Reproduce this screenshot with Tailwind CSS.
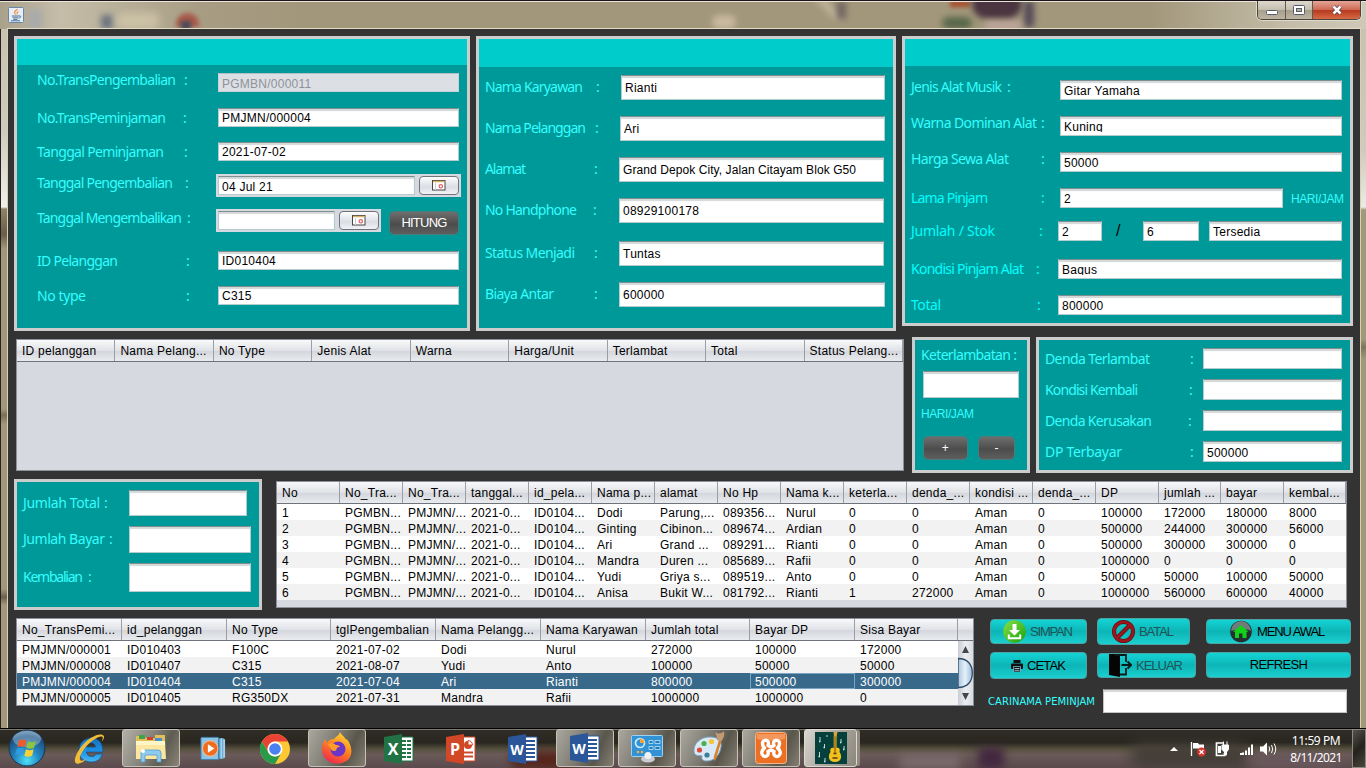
<!DOCTYPE html>
<html lang="id">
<head>
<meta charset="utf-8">
<title>Pengembalian</title>
<script src="https://cdn.jsdelivr.net/npm/@tailwindcss/browser@4"></script>
</head>
<body class="w-[1366px] h-[768px] overflow-hidden bg-[#a2977b] font-['Liberation_Sans',Arial,sans-serif] text-[12px] leading-[14px] tracking-[0.25px] text-black">
<div class="flex flex-col w-[1366px] h-[768px]">

  <!-- Title bar -->
  <header class="relative h-[29px] shrink-0 flex items-start border-t border-[#1c1418] bg-[linear-gradient(90deg,#aaa18b_0,#c5bda9_60px,#a89d84_200px,#a2977b_300px,#a2977b_1150px,#c5bda9_1290px,#cfc8b8_1366px)] overflow-hidden">
    <div class="absolute left-[28px] top-[8px] w-[14px] h-[20px] bg-[#a9aaaa] blur-[3px]"></div>
    <div class="absolute left-[101px] top-[14px] w-[12px] h-[14px] bg-[#6b7480] blur-[3px]"></div>
    <div class="absolute left-[116px] top-[12px] w-[44px] h-[16px] rounded-full bg-[#cdc2a6] blur-[4px]"></div>
    <div class="absolute left-[176px] top-[12px] w-[23px] h-[14px] rounded-t-full bg-[#a85a4a] blur-[2px]"></div>
    <div class="absolute left-[181px] top-[20px] w-[10px] h-[9px] bg-[#4a4a5a] blur-[2px]"></div>
    <div class="absolute left-[712px] top-[14px] w-[24px] h-[14px] rounded-full bg-[#c8b9a0] blur-[3px]"></div>
    <div class="absolute left-[812px] top-[2px] w-[32px] h-[8px] rotate-45 bg-[#beb398] blur-[3px]"></div>
    <div class="absolute left-[837px] top-0 w-[9px] h-[18px] bg-[#716561] blur-[3px]"></div>
    <div class="absolute left-[942px] top-[16px] w-[30px] h-[12px] rounded-full bg-[#58674a] blur-[3px]"></div>
    <div class="absolute left-[950px] top-0 w-[20px] h-[6px] bg-[#a84a2c] blur-[2px]"></div>
    <div class="absolute left-[972px] top-[-12px] w-[50px] h-[30px] rounded-full bg-[#4a3540] blur-[3px]"></div>
    <div class="absolute left-[1024px] top-0 w-[10px] h-[26px] bg-[#554a58] blur-[3px]"></div>
    <div class="absolute left-[985px] top-[20px] w-[36px] h-[9px] bg-[#bda69c] blur-[3px]"></div>
    <div class="absolute left-0 top-0 w-full h-px bg-[#ebe6dc]"></div>
    <div class="absolute left-[7px] bottom-0 w-[1354px] h-px bg-[#e2dcc4]"></div>
    <svg class="relative ml-[8px] mt-[6px]" width="16" height="16" viewBox="0 0 16 16">
      <rect x=".5" y=".5" width="15" height="15" rx="1" fill="#e9eef4" stroke="#6688a8"/>
      <path d="M9.500 2.300c-4 2.500-3.500 3.200-1.800 5.200M10.500 4.500c-2 1.100-1.800 1.800-1 3" fill="none" stroke="#e8883a" stroke-width="1.100"/>
      <path d="M3.800 9h7.200M4.600 10.800h5.600M5.200 12.400h4.200M2.800 13.800h9.400M11 9c2.600-.6 2.400 2-.6 2.200" fill="none" stroke="#49719c" stroke-width="1"/>
    </svg>
    <div class="relative ml-auto mr-[5px] w-[104px] h-[19px] flex rounded-b-[5px] border border-t-0 border-[#4a453e] overflow-hidden shadow-[0_0_0_1px_#e0dacb]">
      <div class="w-[28px] flex items-center justify-center border-r border-[#5f594f] bg-[linear-gradient(#dcd8cd,#c3bdae_50%,#a79f8c_52%,#bcb5a2)]">
        <svg class="mt-[5px]" width="12" height="5"><rect x=".5" y=".5" width="11" height="4" rx="1" fill="#fff" stroke="#555b68"/></svg>
      </div>
      <div class="w-[27px] flex items-center justify-center border-r border-[#5f594f] bg-[linear-gradient(#dcd8cd,#c3bdae_50%,#a79f8c_52%,#bcb5a2)]">
        <svg width="12" height="10"><rect x=".5" y=".5" width="11" height="9" rx="1" fill="#fff" stroke="#555b68"/><rect x="3.500" y="3.500" width="5" height="3" fill="#b5ae9c" stroke="#555b68"/></svg>
      </div>
      <div class="flex-1 flex items-center justify-center bg-[linear-gradient(#e4a596,#cf6a55_48%,#b53a20_52%,#d86a45)]">
        <svg width="12" height="10" viewBox="0 0 12 10"><path d="M2.500 1.500l7 7M9.500 1.500l-7 7" stroke="#5a4048" stroke-width="4"/><path d="M2.500 1.500l7 7M9.500 1.500l-7 7" stroke="#fff" stroke-width="2.500"/></svg>
      </div>
    </div>
  </header>

  <!-- Window body -->
  <div class="flex h-[699px] shrink-0">
    <div class="w-[8px] shrink-0 border-l border-r border-l-[#26231d] border-r-[#d8cfae] bg-[linear-gradient(#c9c2b2_0,#cfcabf_100px,#f0efec_178px,#8f8465_180px,#6a5e4c_205px,#a2977b_220px,#a2977b_380px,#796e58_386px,#a2977b_395px,#a2977b_560px,#6b604e_568px,#a2977b_576px)]"></div>

    <main class="w-[1352px] h-[699px] flex flex-col bg-[#333333] pl-[6px] pt-[7px]">
      <div class="flex gap-[6px] items-start">
        <section id="p1" class="w-[456px] h-[295px] border-[3px] border-[#cccccc] bg-[#009999]"><div class="h-[26px] bg-[#00cccc]"></div></section>
        <section id="p2" class="w-[420px] h-[295px] border-[3px] border-[#cccccc] bg-[#009999]"><div class="h-[28px] bg-[#00cccc]"></div></section>
        <section id="p3" class="w-[451px] h-[290px] border-[3px] border-[#cccccc] bg-[#009999]"><div class="h-[27px] bg-[#00cccc]"></div></section>
      </div>

      <div class="flex items-start mt-[6px]">
        <div id="tA" class="ml-[2px] mt-[2px] w-[888px] h-[132px] border border-[#8c9099] bg-[#d6d9df]"></div>
        <section class="ml-[8px] w-[118px] h-[136px] border-[3px] border-[#cccccc] bg-[#009999] pl-[6px] pt-[5px]">
          <div class="whitespace-nowrap h-[20px] leading-[20px] text-[14px] font-['Noto_Sans',sans-serif] tracking-normal text-[#33ffff]"><span data-w="96" data-f="14px 'Noto Sans'">Keterlambatan :</span></div>
          <div class="ml-[2px] mt-[6px] w-[96px] h-[27px] border border-[#b5cccc] border-t-[#7e8f90] bg-white shadow-[inset_0_2px_1px_#d4d8d8]"></div>
          <div class="mt-[8px] leading-[16px] text-[#33ffff]"><span data-w="53" data-f="12px 'Liberation Sans'">HARI/JAM</span></div>
          <div class="ml-[2px] mt-[14px] flex gap-[10px] text-white">
            <div class="w-[45px] h-[24px] rounded-[5px] border border-[#4a7c7c] bg-[linear-gradient(#6e6e6e,#4c4c4c_55%,#5e5e5e)] flex items-center justify-center">+</div>
            <div class="w-[37px] h-[24px] rounded-[5px] border border-[#4a7c7c] bg-[linear-gradient(#6e6e6e,#4c4c4c_55%,#5e5e5e)] flex items-center justify-center">-</div>
          </div>
        </section>
        <section id="p4" class="ml-[6px] w-[317px] h-[136px] border-[3px] border-[#cccccc] bg-[#009999]"></section>
      </div>

      <div class="flex items-start mt-[6px]">
        <section id="p5" class="w-[248px] h-[131px] border-[3px] border-[#cccccc] bg-[#009999]"></section>
        <div id="tB" class="ml-[14px] mt-[2px] w-[1071px] h-[127px] border border-[#8c9099] bg-[#d6d9df]"></div>
      </div>

      <div class="flex items-start mt-[8px]">
        <div class="ml-[2px] w-[958px] h-[88px] border border-[#8c9099] flex bg-[#d6d9df]">
          <div id="tC" class="w-[941px] overflow-hidden"></div>
          <div class="w-[15px] flex flex-col">
            <div class="h-[22px] border-b border-[#6f737c] bg-[linear-gradient(#f6f7f9,#dfe1e6_50%,#d2d5db_52%,#e9ebee)]"></div>
            <svg width="15" height="64" viewBox="0 0 15 64">
              <defs><linearGradient id="tr"><stop offset="0" stop-color="#c9ccd3"/><stop offset=".5" stop-color="#eceef1"/><stop offset="1" stop-color="#d8dbe0"/></linearGradient>
              <linearGradient id="th"><stop offset="0" stop-color="#a8c4dc"/><stop offset=".5" stop-color="#e6f1f9"/><stop offset="1" stop-color="#9cbcd8"/></linearGradient></defs>
              <rect width="15" height="64" fill="url(#tr)"/>
              <path d="M0 17.500C10 17.500 14.300 24 14.300 32S10 46.500 0 46.500z" fill="url(#th)" stroke="#2f4a66" stroke-width="1.300"/>
              <path d="M4 12l3.500-7 3.500 7zM4 52h7l-3.500 7z" fill="#44474e"/>
            </svg>
          </div>
        </div>
        <div class="ml-[16px] w-[368px]">
          <div class="flex items-start h-[34px] text-[13px] tracking-normal">
            <div class="mt-px w-[97px] h-[25px] rounded-[4px] border border-[#4ba3a5] bg-[linear-gradient(#15d3d4,#0cb5b6_50%,#1ccfd0)] flex items-center pl-[12px] gap-[4px] text-[#1d5558]">
              <svg class="shrink-0" width="23" height="23" viewBox="0 0 23 23"><defs><linearGradient id="g1" x2="1" y2="1"><stop offset="0" stop-color="#8be046"/><stop offset="1" stop-color="#14a30d"/></linearGradient></defs><circle cx="11.500" cy="11.500" r="11.300" fill="url(#g1)"/><path d="M9.500 4h4v6h3.500l-5.500 5.500L6 10h3.500z" fill="#fff"/><path d="M5.800 14.500v3.700h11.400v-3.700" fill="none" stroke="#fff" stroke-width="2"/></svg>
              <span data-w="43" data-f="13px 'Liberation Sans'">SIMPAN</span>
            </div>
            <div class="ml-[10px] w-[93px] h-[27px] rounded-[4px] border border-[#4ba3a5] bg-[linear-gradient(#15d3d4,#0cb5b6_50%,#1ccfd0)] flex items-center pl-[14px] gap-[4px] text-[#1d5558]">
              <svg class="shrink-0" width="23" height="23" viewBox="0 0 23 23"><circle cx="11.500" cy="11.500" r="9.500" fill="none" stroke="#5d0d12" stroke-width="4"/><path d="M5 18L18 5" stroke="#5d0d12" stroke-width="4.200"/><circle cx="11.500" cy="11.500" r="9.500" fill="none" stroke="#9c171c" stroke-width="2.600"/><path d="M5 18L18 5" stroke="#9c171c" stroke-width="2.600"/></svg>
              <span data-w="35" data-f="13px 'Liberation Sans'">BATAL</span>
            </div>
            <div class="ml-[16px] mt-px w-[145px] h-[25px] rounded-[4px] border border-[#4ba3a5] bg-[linear-gradient(#15d3d4,#0cb5b6_50%,#1ccfd0)] flex items-center pl-[23px] gap-[5px]">
              <svg class="shrink-0" width="22" height="23" viewBox="0 0 22 23"><circle cx="11" cy="11.500" r="10.800" fill="#23302f"/><path d="M1 11a10 10 0 0 1 20 0C15 8 8 9 1 11z" fill="#6f7c7b"/><path d="M11 5l7.500 6.800h-2v6.200h-4v-4.500h-3.500V18h-4v-6.200h-2z" fill="#12d11b"/></svg>
              <span class="whitespace-nowrap" data-w="69" data-f="13px 'Liberation Sans'">MENU AWAL</span>
            </div>
          </div>
          <div class="flex items-start h-[37px] text-[13px] tracking-normal">
            <div class="w-[97px] h-[27px] rounded-[4px] border border-[#4ba3a5] bg-[linear-gradient(#15d3d4,#0cb5b6_50%,#1ccfd0)] flex items-center pl-[20px] gap-[4px]">
              <svg class="shrink-0" width="12" height="12" viewBox="0 0 12 12"><path d="M2.500 0h7v3h-7z" fill="#111"/><rect y="3.500" width="12" height="5.500" rx="1" fill="#111"/><path d="M2.500 6.500h7V12h-7z" fill="#111" stroke="#8ce" stroke-width=".7"/><path d="M3.500 8.500h5M3.500 10.300h5" stroke="#bde" stroke-width=".8"/></svg>
              <span data-w="39" data-f="13px 'Liberation Sans'">CETAK</span>
            </div>
            <div class="ml-[10px] mt-px w-[99px] h-[25px] rounded-[4px] border border-[#4ba3a5] bg-[linear-gradient(#15d3d4,#0cb5b6_50%,#1ccfd0)] flex items-center pl-[11px] gap-[4px] text-[#1d5558]">
              <svg class="shrink-0" width="23" height="23" viewBox="0 0 23 23"><path d="M0 0h5l6 2v21L0 21z" fill="#050505"/><path d="M6 1h11V8M17 14v6.500h-6" fill="none" stroke="#0a1a1a" stroke-width="1.800"/><path d="M12.500 11h9M18.500 7.500l3.500 3.500-3.500 3.500" fill="none" stroke="#0a1a1a" stroke-width="2"/></svg>
              <span data-w="47" data-f="13px 'Liberation Sans'">KELUAR</span>
            </div>
            <div class="ml-[10px] w-[145px] h-[26px] rounded-[4px] border border-[#4ba3a5] bg-[linear-gradient(#15d3d4,#0cb5b6_50%,#1ccfd0)] flex items-center justify-center"><span data-w="58" data-f="13px 'Liberation Sans'">REFRESH</span></div>
          </div>
          <div class="flex items-start">
            <div class="ml-[-2px] mt-[6px] w-[115px] shrink-0 font-['DejaVu_Sans',sans-serif] text-[10px] leading-[14px] tracking-normal text-[#33ffff]"><span data-w="107" data-f="10px 'DejaVu Sans'" class="whitespace-nowrap">CARINAMA PEMINJAM</span></div>
            <div class="w-[244px] h-[24px] border border-[#c4c4c4] border-t-[#8a8a8a] bg-white shadow-[inset_0_2px_1px_#d8d8d8]"></div>
          </div>
        </div>
      </div>
    </main>
    <div class="w-[6px] shrink-0 border-l border-[#d8cfae] bg-[linear-gradient(#c9c2b2_0,#cfcabf_120px,#ebeae6_178px,#a2977b_181px,#a2977b_310px,#7e745c_318px,#a2977b_330px)]"></div>
  </div>

  <!-- Taskbar -->
  <footer class="relative h-[40px] flex items-start border-t border-black overflow-hidden bg-[linear-gradient(#2f2d26,#292720_35%,#57513f_52%,#6a5a58_65%,#5b4a4d)]">
    <div class="absolute left-0 top-0 w-full h-px bg-[#7d7a70]"></div>
    <div class="absolute left-[510px] top-[22px] w-[70px] h-[18px] rounded-full bg-[#57241a] blur-[5px]"></div>
    <div class="absolute left-[640px] top-[20px] w-[30px] h-[20px] bg-[#4c211c] blur-[5px]"></div>
    <div class="absolute left-[900px] top-[26px] w-[60px] h-[14px] bg-[#7c6b6d] blur-[5px]"></div>
    <div class="absolute left-[978px] top-[18px] w-[26px] h-[22px] bg-[#42283f] blur-[5px]"></div>
    <div class="absolute left-[1130px] top-[14px] w-[120px] h-[26px] rounded-full bg-[#433e37] blur-[7px]"></div>
    <div class="absolute left-[1250px] top-[24px] w-[90px] h-[16px] bg-[#69585c] blur-[6px]"></div>
    <svg class="relative ml-[8px] shrink-0" width="38" height="38" viewBox="0 0 38 38">
      <defs><radialGradient id="orb" cx=".5" cy=".85" r=".85"><stop offset="0" stop-color="#4fe0f5"/><stop offset=".4" stop-color="#2389c4"/><stop offset=".8" stop-color="#1f4f7d"/><stop offset="1" stop-color="#6a94b4"/></radialGradient></defs>
      <circle cx="19" cy="19" r="18" fill="url(#orb)" stroke="#18344e"/><ellipse cx="19" cy="10" rx="14" ry="8" fill="#b9d5e8" opacity=".4"/>
      <path d="M11 11.500c3-1.500 5-1 7.500.2l-1.700 6.600c-2.600-1.200-4.700-1.300-7.600-.2z" fill="#ee5c2c"/>
      <path d="M20 12.300c3 1.200 5 1.200 8-.3l-1.900 6.800c-2.600 1.200-5 1.200-7.700 0z" fill="#8cc63e"/>
      <path d="M8.800 19.500c3-1.100 5-1 7.600.2l-1.700 6.500c-2.500-1-4.700-1.200-7.500-.2z" fill="#2f9be0"/>
      <path d="M18 20.300c2.600 1.100 5 1.200 7.700-.1L24 26.700c-2.700 1.300-5 1.200-7.700 0z" fill="#fbd136"/>
    </svg>
    <div class="relative ml-[14px] flex gap-[4px] h-[39px]">
      <div class="w-[58px] flex items-center justify-center">
        <svg width="34" height="34" viewBox="0 0 34 34"><defs><linearGradient id="ie" x2="0" y2="1"><stop offset="0" stop-color="#1a6fb8"/><stop offset=".5" stop-color="#1c8ee0"/><stop offset="1" stop-color="#45b8f5"/></linearGradient></defs><path d="M7 19C7 11 12 6 19.500 6S31 11.500 31 20H14.500c.3 3 2.500 4.500 5 4.500 2.200 0 3.700-.8 4.500-2.500h6.500c-1.500 5-5.500 8-11 8C12 30 7 26 7 19zm7.500-4h9c-.3-2.500-2-4-4.500-4s-4.200 1.500-4.500 4z" fill="url(#ie)" stroke="#0d4f8c" stroke-width=".7"/><path d="M32 4.500C30-.5 17 4.500 9 15c-7 9.500-8.500 18-2 16.500 3-.8 5-2 7-4.500-6 4-8.500.5-3.500-7.500C16 10 27 3.500 30 4.500c1.300.5.800 2.500-.3 5 2-2.200 2.500-4 2.300-5z" fill="#f0bd38"/></svg>
      </div>
      <div class="w-[58px] mb-px rounded-[3px] border border-[#c6c2b8] bg-[linear-gradient(115deg,#b3b0a7,#84827a_45%,#5f5c52_70%,#8c8578)] flex items-center justify-center">
        <svg width="34" height="32" viewBox="0 0 34 32"><path d="M2 4h8l2 2h9V3h10v23H2z" fill="#e3bd5a"/><path d="M5 3h6v4H5z" fill="#3fa348"/><path d="M13 5h6v3h-6z" fill="#d04030"/><path d="M21 6h7v3h-7z" fill="#4590cc"/><path d="M2 9h29l1 18H2z" fill="#fbe7a0"/><path d="M2 9h29v4H2z" fill="#fff5c6"/><path d="M7 30v-9q0-3 3-3h14q3 0 3 3v9h-4v-7H11v7z" fill="#8fcbee" stroke="#4f9dcd" stroke-width=".8"/><circle cx="9" cy="19" r="2" fill="#fff"/></svg>
      </div>
      <div class="w-[58px] flex items-center justify-center">
        <svg width="26" height="25" viewBox="0 0 28 26"><path d="M11 2h15v22H11z" fill="#5c9fca"/><path d="M22 2h2v22h-2zM25 3h2v20h-2z" fill="#a7d1ea"/><rect x="1" y="1" width="19" height="24" rx="1" fill="#8dc3e4" stroke="#3878a6"/><circle cx="11" cy="13" r="8.300" fill="#ef6c1e" stroke="#fbc59b"/><path d="M8.500 8.500l7 4.500-7 4.500z" fill="#fff"/></svg>
      </div>
      <div class="w-[58px] flex items-center justify-center">
        <svg width="32" height="32" viewBox="0 0 32 32"><circle cx="16" cy="16" r="15" fill="#fcc934"/><path d="M3 8.500A15 15 0 0 1 29 8.500H16a7.500 7.500 0 0 0-6.500 11z" fill="#ea4335"/><path d="M3 8.500A15 15 0 0 0 16 31l6.500-11.300A7.500 7.500 0 0 1 9.500 19.700z" fill="#279a4b"/><circle cx="16" cy="16" r="7.500" fill="#fff"/><circle cx="16" cy="16" r="5.800" fill="#4a80f0"/></svg>
      </div>
      <div class="w-[58px] mb-px rounded-[3px] border border-[#c6c2b8] bg-[linear-gradient(115deg,#aaa79e,#7b7970_45%,#59564c_70%,#857e72)] flex items-center justify-center">
        <svg width="34" height="34" viewBox="0 0 34 34"><defs><linearGradient id="ff" x1=".8" y1="0" x2=".3" y2="1"><stop offset="0" stop-color="#ffe03a"/><stop offset=".45" stop-color="#ff8a1e"/><stop offset="1" stop-color="#f0264f"/></linearGradient></defs><path d="M20 1c1 3 4 4 5.500 7 2 .3 3.500 3 4 4.500C35 24 28 32.500 17.500 32.500S1 25 2 16c.4-3.500 2-6 3.500-8 0 2 .5 3 1.500 3.500C9 9 11 8 14 8c2-3 5-3 6-7z" fill="url(#ff)"/><circle cx="18" cy="18" r="7.500" fill="#6b36c8"/><path d="M8 13c3-2 6-1 8 1 2 0 3 .5 4 2-3 .2-4 1.500-3.500 3-2 2-6 1-6.500-3-1-.5-2-1.500-2-3z" fill="#ff9b28"/></svg>
      </div>
      <div class="w-[58px] flex items-center justify-center">
        <svg width="32" height="30" viewBox="0 0 32 30"><path d="M17 3h13v24H17z" fill="#fff" stroke="#217346"/><path d="M19 7h9M19 11h9M19 15h9M19 19h9M19 23h9" stroke="#217346" stroke-width="2"/><path d="M23.500 5v20" stroke="#fff"/><path d="M1 3l18-3v30L1 27z" fill="#217346"/><text x="10" y="21" text-anchor="middle" font-family="Open Sans" font-weight="700" font-size="16" letter-spacing="0" fill="#fff">X</text></svg>
      </div>
      <div class="w-[58px] flex items-center justify-center">
        <svg width="32" height="30" viewBox="0 0 32 30"><path d="M17 3h13v24H17z" fill="#fff" stroke="#d24726"/><circle cx="23" cy="11" r="4" fill="#d24726"/><path d="M23 11V6.500a4.500 4.500 0 0 1 4.500 4.500z" fill="#fff" stroke="#d24726"/><path d="M19 18.500h9M19 22.500h9" stroke="#d24726" stroke-width="2"/><path d="M1 3l18-3v30L1 27z" fill="#d24726"/><text x="10" y="21" text-anchor="middle" font-family="Open Sans" font-weight="700" font-size="16" letter-spacing="0" fill="#fff">P</text></svg>
      </div>
      <div class="w-[58px] flex items-center justify-center">
        <svg width="32" height="30" viewBox="0 0 32 30"><path d="M17 3h13v24H17z" fill="#fff" stroke="#2b579a"/><path d="M19 7h9M19 11h9M19 15h9M19 19h9M19 23h9" stroke="#2b579a" stroke-width="1.800"/><path d="M1 3l18-3v30L1 27z" fill="#2b579a"/><text x="10" y="20.500" text-anchor="middle" font-family="Open Sans" font-weight="700" font-size="14" letter-spacing="0" fill="#fff">W</text></svg>
      </div>
      <div class="w-[58px] mb-px rounded-[3px] border border-[#c6c2b8] bg-[linear-gradient(115deg,#aaa79e,#7b7970_45%,#59564c_70%,#857e72)] flex items-center justify-center">
        <svg width="32" height="30" viewBox="0 0 32 30"><path d="M17 3h13v24H17z" fill="#fff" stroke="#2b579a"/><path d="M19 7h9M19 11h9M19 15h9M19 19h9M19 23h9" stroke="#2b579a" stroke-width="1.800"/><path d="M1 3l18-3v30L1 27z" fill="#2b579a"/><text x="10" y="20.500" text-anchor="middle" font-family="Open Sans" font-weight="700" font-size="14" letter-spacing="0" fill="#fff">W</text></svg>
      </div>
      <div class="w-[58px] mb-px rounded-[3px] border border-[#c6c2b8] bg-[linear-gradient(115deg,#aaa79e,#7b7970_45%,#59564c_70%,#857e72)] flex items-center justify-center">
        <svg width="34" height="30" viewBox="0 0 34 30"><rect x="1.500" y="2.500" width="31" height="21" rx="1" fill="#3193d6" stroke="#9cd1f2"/><circle cx="10" cy="10" r="4.500" fill="none" stroke="#cdeafa" stroke-width="1.700"/><path d="M10 10V5.500A4.500 4.500 0 0 1 14.500 10z" fill="#f6a338"/><path d="M19 7.500h4v3h-4zM25 7.500h5v3h-5zM19 13.500h4v3h-4zM25 13.500h5v3h-5z" fill="#237db8" stroke="#bfe4f8" stroke-width=".8"/><circle cx="8" cy="19" r="1.300" fill="#f7b045"/><circle cx="12" cy="19" r="1.300" fill="#f7b045"/><ellipse cx="18" cy="26" rx="7" ry="3.500" fill="#c9cdd1"/><circle cx="18" cy="22.500" r="3.500" fill="#f0f2f3"/></svg>
      </div>
      <div class="w-[58px] mb-px rounded-[3px] border border-[#c6c2b8] bg-[linear-gradient(115deg,#aaa79e,#7b7970_45%,#59564c_70%,#857e72)] flex items-center justify-center">
        <svg width="34" height="34" viewBox="0 0 34 34"><path d="M2 21C1 12 9 6 18 6c8 0 12 4 11 10-1 7-6 14-14 14-4 0-6-2-5-4 1-3-7 1-8-5z" fill="#d9eaf6" stroke="#7ba6c4"/><circle cx="7.500" cy="19" r="2.600" fill="#e04a3c"/><circle cx="12" cy="12.500" r="2.600" fill="#4bb04f"/><circle cx="19.500" cy="10.500" r="2.600" fill="#f3c536"/><circle cx="15" cy="24" r="2.600" fill="#3e7f98"/><path d="M23 30c-2-3-1-5 0-8l4-13 2.500.8-4 13c-1 3-1 5-2.500 7.200z" fill="#d9822d"/><path d="M25 9c0-4-1-5-2-8 4 3 6 1 9-.5 1 4-.5 7-3 10z" fill="#c49a72"/></svg>
      </div>
      <div class="w-[58px] mb-px rounded-[3px] border border-[#c6c2b8] bg-[linear-gradient(115deg,#aaa79e,#7b7970_45%,#59564c_70%,#857e72)] flex items-center justify-center">
        <svg width="32" height="32" viewBox="0 0 32 32"><rect x=".5" y=".5" width="31" height="31" rx="3" fill="#ec7024" stroke="#f7b58c"/><path d="M2 2h28v5q-14 3-28 0z" fill="#f8b184" opacity=".6"/><path d="M13 13.500C14.500 9.500 12 7.500 9.500 8.500 6.500 9.500 7 13.500 9.500 16 6 18.500 6 22.500 8.500 24c3 1.500 5.500-1 4.500-4.500M19 13.500c-1.500-4 1-6 3.500-5 3 1 2.500 5 0 7.500 3.500 2.500 3.500 6.500 1 8-3 1.500-5.500-1-4.500-4.500M13 13.500q3 2.500 6 0M13 19.500q3-2.500 6 0" fill="none" stroke="#fff" stroke-width="3.400" stroke-linejoin="round" stroke-linecap="round"/></svg>
      </div>
      <div class="w-[53px] mb-px rounded-[3px] border border-[#dedad2] bg-[linear-gradient(115deg,#d8d6cf,#aaa79e_50%,#8c877b)] shadow-[4px_0_0_-1px_#8f8b80] flex items-center justify-center">
        <svg width="32" height="32" viewBox="0 0 32 32"><rect width="32" height="32" fill="#05403c"/><path d="M18.500 0h4l-1 5h-2.500z" fill="#d9a43a"/><path d="M18.700 4h2.800v12c2.500-1 4 1 3 4 3 4 2 10-4.500 10s-7.500-6-4.500-10c-1-3 .7-5 3.200-4z" fill="#f2c11c"/><path d="M20 4v18" stroke="#a06a1c" stroke-width="1.500"/><path d="M17.500 26h5M18.500 21.500h3" stroke="#5a3a12" stroke-width="1.300"/><path d="M5 5v4M9.500 12v3M4.500 20v4M10 26v3M12 3v2M26 7v3M29 14v3" stroke="#d7e6e3" stroke-width=".9"/><path d="M4 9.500h1.500M8.500 15.500H10M3.500 24.500H5M9 29.500h1.500M25 10.500h1.500M28 17.500h1.500" stroke="#d7e6e3" stroke-width="1.300"/></svg>
      </div>
    </div>
    <div class="relative ml-auto flex items-center h-[39px] text-white">
      <svg width="108" height="18" viewBox="0 0 108 18"><path d="M0 11l4-4 4 4z" fill="#fff"/>
        <path d="M21.500 2v14" stroke="#fff" stroke-width="1.300"/><path d="M23 3h5l1 1.500h5V10h-5l-1-1.500h-5z" fill="#fff"/><circle cx="31.500" cy="12" r="4.500" fill="#d0342c"/><path d="M29.500 10l4 4M33.500 10l-4 4" stroke="#fff" stroke-width="1.300"/>
        <path d="M53 3h-6.500v12.500h8V13" fill="none" stroke="#fff" stroke-width="1.700"/><path d="M48 6h3v7h-3z" fill="#fff"/><path d="M52 5h6.500v4.500L56.500 12v3h-2v-3L52 9.500zM53.500 1.500v4M57 1.500v4" fill="#fff" stroke="#fff"/>
        <path d="M70 14h2M73 12.500v2.500M76 10.500v4.500M79 7.500v7.500M82 4.500v10.500" stroke="#fff" stroke-width="2"/>
        <path d="M90 6.500h3L97 2.500v13L93 11.500h-3z" fill="#fff"/><path d="M99 6.500q1.500 2.500 0 5M101.500 5q2.500 4 0 8M104 3.500q3.500 5.500 0 11" fill="none" stroke="#fff" stroke-width="1"/></svg>
      <div class="ml-[7px] w-[62px] mt-[1px] flex flex-col items-center font-['Noto_Sans',sans-serif] text-[12px] leading-[17px] tracking-normal"><span data-w="49" data-f="12px 'Noto Sans'" class="whitespace-nowrap">11:59 PM</span><span data-w="52" data-f="12px 'Noto Sans'" class="whitespace-nowrap">8/11/2021</span></div>
      <div class="ml-[5px] w-[14px] h-[39px] border border-[#8d897f] bg-[linear-gradient(135deg,#55524b,#24221d_50%,#4c463f)]"></div>
    </div>
  </footer>
</div>

<script>
const LABEL = "shrink-0 whitespace-nowrap h-[20px] leading-[20px] text-[14px] font-['Noto_Sans',sans-serif] tracking-normal";
const FIELD = "shrink-0 border border-[#b5cccc] border-t-[#7e8f90] bg-white shadow-[inset_0_2px_1px_#d4d8d8] pl-[3px] whitespace-nowrap overflow-hidden";
const field = (cls, text = "", clip = "") => `<div class="${FIELD} ${cls}">${text === "" ? "" : `<div class="${clip}">${text}</div>`}</div>`;
const row = (rowCls, lblCls, text, w, colonCls, rest) =>
  `<div class="flex items-start ${rowCls}"><div class="${LABEL} ${lblCls}"><span data-w="${w}" data-f="14px 'Noto Sans'">${text}</span></div><div class="${LABEL} ${colonCls}">:</div>${rest}</div>`;
const add = (id, html) => document.getElementById(id).insertAdjacentHTML("beforeend", html);
const C1 = "text-[#33ffff]";

const F19 = "w-[241px] h-[19px] pt-[2px]";
const calBtn = `<div class="w-[40px] h-[19px] rounded-[4px] border border-[#6f747c] bg-[linear-gradient(#fdfdfe,#dadde3_60%,#f2f3f6)] flex items-center justify-center"><svg width="14" height="11" viewBox="0 0 14 11"><rect x=".5" y=".5" width="12.500" height="9.500" fill="#fff" stroke="#4a4542"/><path d="M1 1.500h11.500" stroke="#d8b06a" stroke-width="1.500"/><path d="M3.500 3v7" stroke="#ccd"/><circle cx="8.800" cy="6.300" r="1.700" fill="none" stroke="#e06060" stroke-width="1.200"/></svg></div>`;
add("p1",
  row("ml-[20px] mt-[5px] h-[20px]", "w-[147px] " + C1, "No.TransPengembalian", 139, "w-[34px] " + C1,
    `<div class="mt-[3px] w-[241px] h-[19px] border border-[#c9d2d6] border-t-[#b6bfc4] bg-[#dcdfe4] text-[#8e9299] pl-[3px] pt-[3px]">PGMBN/000011</div>`) +
  row("ml-[20px] mt-[18px] h-[20px]", "w-[146px] " + C1, "No.TransPeminjaman", 129, "w-[35px] " + C1, field(F19, "PMJMN/000004")) +
  row("ml-[20px] mt-[14px] h-[20px]", "w-[147px] " + C1, "Tanggal Peminjaman", 127, "w-[34px] " + C1, field(F19, "2021-07-02")) +
  row("ml-[20px] mt-[11px] h-[20px]", "w-[148px] " + C1, "Tanggal Pengembalian", 136, "w-[31px] " + C1,
    `<div class="mt-px w-[245px] h-[23px] bg-[#d6d9df] flex gap-[4px] p-[2px]">${field("w-[197px] h-[19px] pt-[3px]", "04 Jul 21")}${calBtn}</div>`) +
  row("ml-[20px] mt-[15px] h-[20px]", "w-[150px] " + C1, "Tanggal Mengembalikan", 145, "w-[29px] " + C1,
    `<div class="mt-px w-[165px] h-[23px] bg-[#d6d9df] flex gap-[4px] p-[2px]">${field("w-[117px] h-[19px]")}${calBtn}</div>
     <div class="ml-[8px] mt-[3px] w-[70px] h-[24px] shrink-0 rounded-[5px] border border-[#4a7c7c] bg-[linear-gradient(#6e6e6e,#4c4c4c_55%,#5e5e5e)] flex items-center justify-center text-[13px] text-white tracking-normal"><span data-w="46" data-f="13px 'Liberation Sans'">HITUNG</span></div>`) +
  row("ml-[20px] mt-[23px] h-[20px]", "w-[149px] " + C1, "ID Pelanggan", 81, "w-[32px] " + C1, field(F19, "ID010404")) +
  row("ml-[20px] mt-[15px] h-[20px]", "w-[149px] " + C1, "No type", 49, "w-[32px] " + C1, field(F19, "C315")));

add("p2",
  row("ml-[6px] mt-[8px] h-[25px]", "mt-[2px] w-[111px] " + C1, "Nama Karyawan", 98, "mt-[2px] w-[25px] " + C1, field("w-[264px] h-[25px] pt-[5px]", "Rianti")) +
  row("ml-[6px] mt-[16px] h-[25px]", "mt-[2px] w-[110px] " + C1, "Nama Pelanggan", 101, "mt-[2px] w-[25px] " + C1, field("w-[265px] h-[25px] pt-[5px]", "Ari")) +
  row("ml-[6px] mt-[16px] h-[25px]", "mt-[2px] w-[109px] " + C1, "Alamat", 41, "mt-[2px] w-[25px] " + C1, field("w-[265px] h-[25px] pt-[5px]", `<span data-w="233" data-f="12px 'Liberation Sans'">Grand Depok City, Jalan Citayam Blok G50</span>`)) +
  row("ml-[6px] mt-[16px] h-[25px]", "mt-[2px] w-[108px] " + C1, "No Handphone", 92, "mt-[2px] w-[26px] " + C1, field("w-[265px] h-[25px] pt-[5px]", "08929100178")) +
  row("ml-[6px] mt-[18px] h-[25px]", "mt-[2px] w-[109px] " + C1, "Status Menjadi", 90, "mt-[2px] w-[25px] " + C1, field("w-[265px] h-[25px] pt-[5px]", "Tuntas")) +
  row("ml-[6px] mt-[16px] h-[25px]", "mt-[2px] w-[109px] " + C1, "Biaya Antar", 69, "mt-[2px] w-[25px] " + C1, field("w-[266px] h-[25px] pt-[5px]", "600000")));

const CLIP = "h-[12px] overflow-hidden";
const C2 = "text-[#00ffff]";
add("p3",
  row("ml-[6px] mt-[11px] h-[20px]", "w-[96px] " + C1, "Jenis Alat Musik", 91, "w-[53px] " + C1, field("mt-[3px] w-[282px] h-[20px] pt-[3px]", "Gitar Yamaha")) +
  row("ml-[6px] mt-[16px] h-[20px]", "w-[130px] " + C1, "Warna Dominan Alat", 126, "w-[19px] " + C1, field("mt-[3px] w-[282px] h-[20px] pt-[3px]", "Kuning", CLIP)) +
  row("ml-[6px] mt-[16px] h-[20px]", "w-[130px] " + C1, "Harga Sewa Alat", 98, "w-[19px] " + C1, field("mt-[3px] w-[282px] h-[20px] pt-[3px]", "50000")) +
  row("ml-[6px] mt-[19px] h-[20px]", "w-[130px] " + C2, "Lama Pinjam", 77, "w-[19px] " + C2, field("w-[223px] h-[20px] pt-[3px]", "2") + `<div class="ml-[8px] mt-[4px] text-[#33ffff] tracking-normal whitespace-nowrap"><span data-w="53" data-f="12px 'Liberation Sans'">HARI/JAM</span></div>`) +
  row("ml-[6px] mt-[13px] h-[20px]", "w-[128px] " + C2, "Jumlah / Stok", 84, "w-[19px] " + C2,
    field("w-[44px] h-[20px] pt-[3px]", "2") + `<div class="w-[41px] pl-[14px] pt-[2px] text-[16px] leading-[16px]">/</div>` + field("w-[56px] h-[20px] pt-[3px]", "6") + field("ml-[10px] w-[133px] h-[20px] pt-[3px]", "Tersedia")) +
  row("ml-[6px] mt-[18px] h-[20px]", "w-[125px] " + C2, "Kondisi Pinjam Alat", 113, "w-[22px] " + C2, field("w-[284px] h-[20px] pt-[3px]", "Bagus", CLIP)) +
  row("ml-[6px] mt-[16px] h-[20px]", "w-[126px] " + C2, "Total", 30, "w-[21px] " + C2, field("w-[284px] h-[20px] pt-[3px]", "800000")));

add("p4",
  row("ml-[6px] mt-[8px] h-[21px]", "mt-px w-[145px] " + C1, "Denda Terlambat", 105, "mt-px w-[13px] " + C1, field("w-[139px] h-[21px]")) +
  row("ml-[6px] mt-[10px] h-[21px]", "mt-px w-[144px] " + C1, "Kondisi Kembali", 93, "mt-px w-[14px] " + C1, field("w-[139px] h-[21px]")) +
  row("ml-[6px] mt-[10px] h-[21px]", "mt-px w-[143px] " + C1, "Denda Kerusakan", 107, "mt-px w-[15px] " + C1, field("w-[139px] h-[21px]")) +
  row("ml-[6px] mt-[10px] h-[21px]", "mt-px w-[145px] " + C1, "DP Terbayar", 77, "mt-px w-[13px] " + C1, field("w-[139px] h-[21px] pt-[4px]", "500000")));

add("p5",
  row("ml-[6px] mt-[8px] h-[26px]", "mt-[3px] w-[81px] " + C1, "Jumlah Total", 77, "mt-[3px] w-[25px] " + C1, field("w-[118px] h-[26px]")) +
  row("ml-[6px] mt-[10px] h-[27px]", "mt-[3px] w-[86px] " + C1, "Jumlah Bayar", 82, "mt-[3px] w-[20px] " + C1, field("w-[122px] h-[27px]")) +
  row("ml-[6px] mt-[10px] h-[29px]", "mt-[4px] w-[65px] " + C1, "Kembalian", 60, "mt-[4px] w-[41px] " + C1, field("w-[122px] h-[29px]")));

const HEAD = "h-[22px] border-b border-[#6f737c] bg-[linear-gradient(#f8f9fa,#e0e2e7_50%,#d3d6dc_52%,#e9ebee)]";
const table = (id, grid, head, rows, sel = -1) => add(id,
  `<div class="${grid} ${HEAD}">${head.map(h => `<div class="border-r border-[#9a9ea6] pl-[5px] pt-[4px] whitespace-nowrap overflow-hidden">${h}</div>`).join("")}</div>` +
  rows.map((r, i) => `<div class="${grid} h-[16px] ${i === sel ? "bg-[#39698a] text-white" : i % 2 ? "bg-[#f2f2f2]" : "bg-white"}">${r.map((c, j) =>
    `<div class="pl-[5px] pt-[2px] h-[16px] whitespace-nowrap overflow-hidden ${i === sel && j === 7 ? "outline outline-[#7ba4c4] -outline-offset-1" : ""}">${c}</div>`).join("")}</div>`).join(""));

table("tA", "grid grid-cols-9", ["ID pelanggan", "Nama Pelang...", "No Type", "Jenis Alat", "Warna", "Harga/Unit", "Terlambat", "Total", "Status Pelang..."], []);
const B = [
  ["Dodi", "Parung,...", "089356...", "Nurul", "0", "0", "100000", "172000", "180000", "8000"],
  ["Ginting", "Cibinon...", "089674...", "Ardian", "0", "0", "500000", "244000", "300000", "56000"],
  ["Ari", "Grand ...", "089291...", "Rianti", "0", "0", "500000", "300000", "300000", "0"],
  ["Mandra", "Duren ...", "085689...", "Rafii", "0", "0", "1000000", "0", "0", "0"],
  ["Yudi", "Griya s...", "089519...", "Anto", "0", "0", "50000", "50000", "100000", "50000"],
  ["Anisa", "Bukit W...", "081792...", "Rianti", "1", "272000", "1000000", "560000", "600000", "40000"]];
table("tB", "grid grid-cols-[repeat(14,63px)_62px_63px_1fr]", ["No", "No_Tra...", "No_Tra...", "tanggal...", "id_pela...", "Nama p...", "alamat", "No Hp", "Nama k...", "keterla...", "denda_...", "kondisi ...", "denda_...", "DP", "jumlah ...", "bayar", "kembal..."],
  B.map((r, i) => [i + 1, "PGMBN...", "PMJMN/...", "2021-0...", "ID0104...", ...r.slice(0, 6), "Aman", "0", ...r.slice(6)]));
table("tC", "grid grid-cols-[105px_105px_104px_105px_105px_105px_104px_105px_1fr]", ["No_TransPemi...", "id_pelanggan", "No Type", "tglPengembalian", "Nama Pelangg...", "Nama Karyawan", "Jumlah total", "Bayar DP", "Sisa Bayar"], [
  ["PMJMN/000001", "ID010403", "F100C", "2021-07-02", "Dodi", "Nurul", "272000", "100000", "172000"],
  ["PMJMN/000008", "ID010407", "C315", "2021-08-07", "Yudi", "Anto", "100000", "50000", "50000"],
  ["PMJMN/000004", "ID010404", "C315", "2021-07-04", "Ari", "Rianti", "800000", "500000", "300000"],
  ["PMJMN/000005", "ID010405", "RG350DX", "2021-07-31", "Mandra", "Rafii", "1000000", "1000000", "0"]], 2);

// Spread each caption over its declared width
const ctx = document.createElement("canvas").getContext("2d");
document.querySelectorAll("[data-w]").forEach(el => {
  ctx.font = el.dataset.f;
  const d = +el.dataset.w - ctx.measureText(el.textContent).width;
  el.style.letterSpacing = (d / (el.textContent.length - 1)).toFixed(3) + "px";
});
</script>
</body>
</html>
